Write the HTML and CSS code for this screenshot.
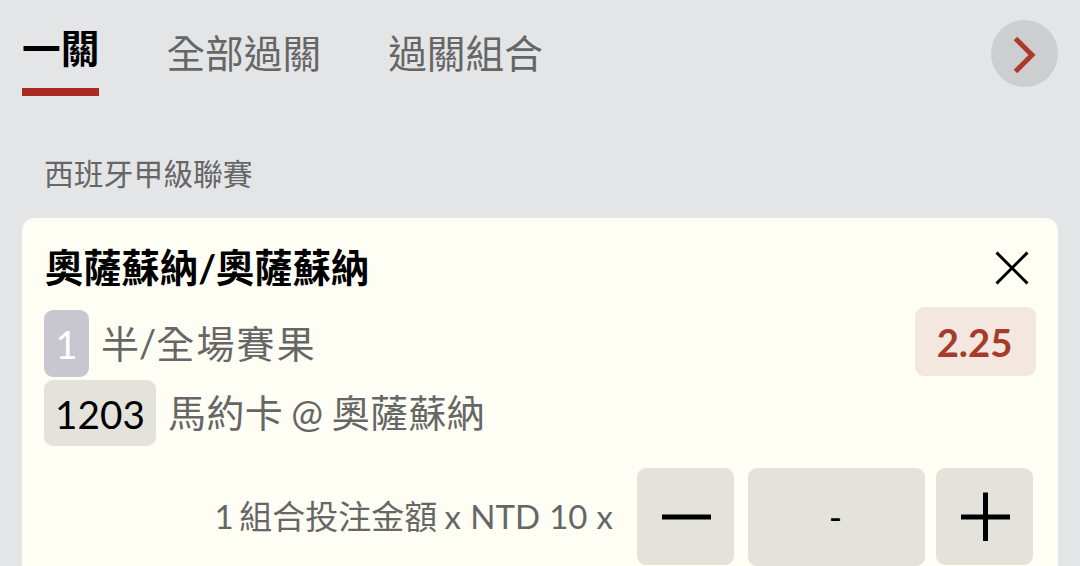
FILE: index.html
```html
<!DOCTYPE html>
<html lang="zh-TW">
<head>
    <meta charset="UTF-8">
    <meta name="viewport" content="width=device-width, initial-scale=1.0">
    <title>投注單</title>
    <link rel="stylesheet" href="styles.css">
</head>
<body>
    <nav class="tabs">
        <a class="tab active">一關</a>
        <a class="tab">全部過關</a>
        <a class="tab">過關組合</a>
        <button class="next-btn" aria-label="下一頁">
            <svg width="66" height="66" viewBox="0 0 66 66"><path d="M24.500 17.500L41 34L24.500 50.500" fill="none" stroke="#ad3a2d" stroke-width="5"/></svg>
        </button>
    </nav>

    <h2 class="league">西班牙甲級聯賽</h2>

    <section class="bet-card">
        <div class="row title-row">
            <h3>奧薩蘇納/奧薩蘇納</h3>
            <button class="close-btn" aria-label="刪除">
                <svg width="34" height="34" viewBox="0 0 34 34"><path d="M1.500 1.500L32.500 32.500M32.500 1.500L1.500 32.500" stroke="#000" stroke-width="3"/></svg>
            </button>
        </div>
        <div class="row market-row">
            <span class="count">1</span>
            <span class="market"><span class="half">半/</span>全場賽果</span>
            <span class="odds">2.25</span>
        </div>
        <div class="row match-row">
            <span class="code">1203</span>
            <span class="match">馬約卡 @ 奧薩蘇納</span>
        </div>
        <div class="row stake-row">
            <p class="stake-label"><span class="combos">1 </span>組合投注金額<span class="unit"> x</span> NTD 10 x</p>
            <button class="step" aria-label="減少">
                <svg width="50" height="50" viewBox="0 0 50 50"><path d="M1 25H50" stroke="#000" stroke-width="5"/></svg>
            </button>
            <span class="amount">-</span>
            <button class="step" aria-label="增加">
                <svg width="50" height="50" viewBox="0 0 50 50"><path d="M1 25H50M25.500 0.500V49" stroke="#000" stroke-width="5"/></svg>
            </button>
        </div>
    </section>
</body>
</html>
```

FILE: styles.css
```css
* {
    margin: 0;
    padding: 0;
    box-sizing: border-box;
}
body {
    height: 566px;
    overflow: hidden;
    padding: 0 22px;
    background-color: #e4e5e7;
    color: #666;
    font-family: Lato, "Noto Sans CJK TC", sans-serif;
}
button {
    border: none;
    background: none;
    cursor: pointer;
}
svg {
    display: block;
}
.tabs {
    display: flex;
    height: 96px;
}
.tab {
    height: 96px;
    margin-right: 67px;
    padding-top: 8px;
    font-size: 38.7px;
    line-height: 90px;
    white-space: nowrap;
}
.tab.active {
    padding-top: 3px;
    border-bottom: 8px solid #a82a22;
    color: #000;
    font-weight: bold;
}
.next-btn {
    width: 67px;
    height: 67px;
    margin: 20px 0 0 auto;
    border-radius: 50%;
    background-color: #cccecf;
}
.league {
    height: 122px;
    padding: 53px 0 0 22px;
    font-size: 29.8px;
    font-weight: normal;
    line-height: 50px;
}
.bet-card {
    height: 360px;
    padding: 22px;
    border-radius: 13px 13px 0 0;
    background-color: #fefef5;
}
.row {
    display: flex;
    align-items: center;
}
.title-row {
    height: 56px;
    justify-content: space-between;
    padding: 0 7px 0 1px;
}
h3 {
    color: #000;
    font-size: 38.3px;
    line-height: 54px;
    padding-bottom: 2px;
}
.market-row {
    height: 84px;
    padding-top: 7px;
}
.count {
    width: 45px;
    height: 67px;
    margin-top: 4px;
    border-radius: 9px;
    background-color: #c8c6ce;
    color: #fff;
    font-size: 38px;
    line-height: 69px;
    text-align: center;
}
.market, .match {
    margin-left: 12px;
    font-size: 38px;
    white-space: nowrap;
}
.market {
    letter-spacing: 2.2px;
}
.market .half {
    letter-spacing: 0;
}
.match {
    padding-bottom: 5px;
    letter-spacing: 0.4px;
    word-spacing: -2px;
}
.odds {
    width: 121px;
    height: 69px;
    margin-left: auto;
    padding-right: 2px;
    border-radius: 9px;
    background-color: #f4e7e0;
    color: #a53b2b;
    font-size: 38.3px;
    font-weight: bold;
    line-height: 70px;
    text-align: center;
}
.code {
    width: 112px;
    height: 66px;
    border-radius: 9px;
    background-color: #e3e3dc;
    color: #000;
    font-size: 38.7px;
    line-height: 68px;
    text-align: center;
}
.stake-row {
    align-items: flex-start;
    justify-content: flex-end;
    margin-top: 22px;
    padding-right: 3px;
}
.stake-label {
    align-self: center;
    margin-right: 24px;
    padding-bottom: 4px;
    font-size: 33px;
    white-space: nowrap;
    word-spacing: 0.7px;
}
.combos {
    word-spacing: -3px;
}
.unit {
    word-spacing: -1px;
}
.step, .amount {
    display: flex;
    align-items: center;
    justify-content: center;
    width: 97px;
    height: 97px;
    border-radius: 9px;
    background-color: #e3e3dc;
}
.amount {
    width: 177px;
    height: 98px;
    margin: 0 11px 0 14px;
    padding-right: 2px;
    color: #000;
    font-size: 36px;
}
```
